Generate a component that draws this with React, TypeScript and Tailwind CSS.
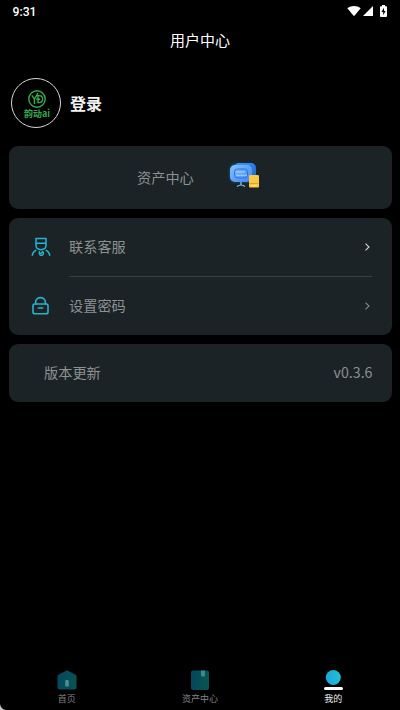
import type { ReactNode } from 'react';

const StatusBar = () => (
  <header className="flex h-6 items-center justify-between pl-[12.5px] pr-[13px] text-white">
    <span className="mt-px font-[Roboto,sans-serif] text-[12.2px] font-medium leading-none">9:31</span>
    <div className="-mt-[2px] flex items-center">
      <svg className="h-3 w-[14px]" viewBox="0 0 14 12" fill="currentColor">
        <path d="M0.3 3.2C4.2 0.1 9.8 0.1 13.7 3.2L7 11.2Z" />
      </svg>
      <svg className="ml-[2px] h-3 w-[10px]" viewBox="0 0 10 12" fill="currentColor">
        <path d="M10 1V11H0Z" />
      </svg>
      <svg className="ml-[7px] h-3 w-[7px]" viewBox="0 0 7 12">
        <path d="M2 0h3v1.3h1.3q.7 0 .7.7v9q0 1-.9 1H.9Q0 12 0 11V2q0-.7.7-.7H2Z" fill="currentColor" />
        <path d="M4 2.8 1.4 7h1.8v3.2L5.6 6H4Z" fill="#000" />
      </svg>
    </div>
  </header>
);

const Avatar = () => (
  <div className="flex h-[50px] w-[50px] flex-col items-center rounded-full border border-[#d8d8d8] pt-[11px] pl-[2px] text-[#35aa4b]">
    <svg className="h-[18px] w-[18px] shrink-0" viewBox="0 0 18 18" fill="none" stroke="currentColor" strokeWidth="1.4">
      <circle cx="9" cy="9" r="8.2" />
      <path d="M3.8 5.4 6.4 9.2M10 3.2 6.4 9.2V14M10 5.6V12.6h1.2c4.6 0 4.6-7 0-7H9M8.2 9.2h4" />
    </svg>
    <span className="whitespace-nowrap text-[9px] font-bold leading-[11px]">韵动ai</span>
  </div>
);

const AssetIcon = () => (
  <svg className="h-[32px] w-[36px]" viewBox="0 0 36 32">
    <defs>
      <linearGradient id="asset-back" x1="0" x2="1" y1="0" y2="1">
        <stop stopColor="#3e9bf0" />
        <stop offset="1" stopColor="#1764cf" />
      </linearGradient>
      <linearGradient id="asset-front" x1="0" x2="1" y1="0" y2="1">
        <stop stopColor="#86c4ff" />
        <stop offset="1" stopColor="#3f82f2" />
      </linearGradient>
      <filter id="glow" x="-30%" y="-30%" width="160%" height="160%">
        <feGaussianBlur stdDeviation="1.6" />
      </filter>
    </defs>
    <rect x="3" y="5" width="24" height="18" rx="5" fill="#087bc8" opacity=".65" filter="url(#glow)" />
    <rect x="7" y="4" width="22" height="18" rx="5" fill="url(#asset-back)" />
    <rect x="3" y="6" width="22" height="17" rx="5" fill="url(#asset-front)" />
    <rect x="7.5" y="10" width="13" height="9" rx="3" fill="none" stroke="#2f72df" strokeWidth="1" />
    <path d="M9 13h9M9 16.2h11" stroke="#a8d4ff" strokeWidth="1.1" />
    <path d="M14 23v3M10 27.5q4-3 8 0" fill="none" stroke="#8aceef" strokeWidth="1.2" />
    <rect x="22" y="16" width="10" height="12.5" rx="1" fill="#fac943" />
    <path d="M22.5 24.5h9" stroke="#d69522" strokeWidth=".8" />
    <path d="M24.5 26.6h5" stroke="#fff0a2" strokeWidth=".8" />
  </svg>
);

const ServiceIcon = () => (
  <svg className="h-5 w-5" viewBox="0 0 20 20" fill="none" stroke="#25b4cf" strokeWidth="1.5" strokeLinecap="round" strokeLinejoin="round">
    <path d="M5 1.6h10v4.6H5ZM5 6.2v2.4c0 5.4 10 5.4 10 0V6.2M1.3 18.2c.3-2.2 1.4-3.8 3.4-4.8M18.7 18.2c-.3-2.2-1.4-3.8-3.4-4.8" />
    <path d="M8.4 14.8v1.6a2 2 0 1 0 3.2-1.7L10 16.2" />
  </svg>
);

const LockIcon = () => (
  <svg className="h-5 w-5" viewBox="0 0 20 20" fill="none" stroke="#25b4cf" strokeWidth="1.6" strokeLinecap="round" strokeLinejoin="round">
    <rect x="2" y="8" width="15" height="9.8" rx="1.8" />
    <path d="M4.6 8V6.5C4.6 0 14.4 0 14.4 6.5V8M7.3 12h4.4" />
  </svg>
);

type MenuRowProps = {
  icon: ReactNode;
  label: string;
  arrowClass: string;
};

const MenuRow = ({ icon, label, arrowClass }: MenuRowProps) => (
  <div className="flex h-[58px] items-center pl-[22px] pr-[21px]">
    {icon}
    <span className="ml-[18px] flex-1">{label}</span>
    <svg className={`h-2 w-[7px] ${arrowClass}`} viewBox="0 0 7 8" fill="none" stroke="currentColor" strokeWidth="1.1">
      <path d="M1.5.7 5 4 1.5 7.3" />
    </svg>
  </div>
);

const HomeIcon = () => (
  <svg className="h-[22px] w-[22px]" viewBox="0 0 22 22">
    <path d="M11 1.2 20 6q.5.3.5 1v11.5q0 2-2 2h-15q-2 0-2-2V7q0-.7.5-1Z" fill="url(#tab-fill)" />
    <rect x="9.2" y="11" width="3.6" height="6.5" rx="1" fill="#4c8d92" />
  </svg>
);

const BookIcon = () => (
  <svg className="h-[22px] w-[22px]" viewBox="0 0 22 22">
    <rect x="2" y="1.5" width="18" height="19.5" rx="2" fill="url(#tab-fill)" />
    <path d="M5 2v18.5" stroke="#08404f" strokeWidth=".6" />
    <path d="M12 1.5h4v5.2q-2 2-4 0Z" fill="#438589" />
  </svg>
);

const ProfileIcon = () => (
  <svg className="h-[22px] w-[22px]" viewBox="0 0 22 22">
    <circle cx="11.3" cy="8.5" r="7.5" fill="url(#profile-fill)" />
    <rect x="2" y="18" width="19" height="3" rx="1.5" fill="#fff" />
  </svg>
);

const tabs = [
  { label: '首页', icon: HomeIcon, active: false },
  { label: '资产中心', icon: BookIcon, active: false },
  { label: '我的', icon: ProfileIcon, active: true }
];

const TabBar = () => (
  <nav className="relative mt-auto grid h-[41px] grid-cols-3">
    <svg className="absolute h-0 w-0">
      <defs>
        <linearGradient id="tab-fill">
          <stop stopColor="#07475f" />
          <stop offset="1" stopColor="#065552" />
        </linearGradient>
        <linearGradient id="profile-fill">
          <stop stopColor="#1ea7df" />
          <stop offset="1" stopColor="#20c0d0" />
        </linearGradient>
      </defs>
    </svg>
    {tabs.map((tab) => (
      <div key={tab.label} className="flex flex-col items-center">
        <tab.icon />
        <span className={`mt-[2px] text-[9px] leading-[12px] ${tab.active ? 'text-[#eeeeee]' : 'text-[#858585]'}`}>
          {tab.label}
        </span>
      </div>
    ))}
    {/* Rounded screen corner */}
    <svg className="absolute bottom-0 left-0 h-[6px] w-[6px]" viewBox="0 0 6 6">
      <path d="M0 0Q.9 5 5.5 6H0Z" fill="#c4c4c4" />
    </svg>
  </nav>
);

const App = () => {
  return (
    <div className="flex h-[710px] w-[400px] flex-col overflow-hidden bg-black font-['Noto_Sans_CJK_SC',sans-serif]">
      <StatusBar />
      <h1 className="h-[34px] text-center text-[15px] leading-[32px] text-white">用户中心</h1>

      <div className="mt-5 ml-[11px] flex items-center">
        <Avatar />
        <span className="ml-[9px] text-[16px] font-bold text-[#f2f2f2]">登录</span>
      </div>

      <main className="mt-[18px] ml-[9px] mr-2 flex flex-col gap-[9px] text-[14.2px] text-[#8d9192]">
        <section className="flex h-[63px] items-center rounded-[9px] bg-[#1b2326] pl-32">
          <span>资产中心</span>
          <div className="ml-[33px] -mt-[5px]">
            <AssetIcon />
          </div>
        </section>

        <section className="flex h-[117px] flex-col rounded-[9px] bg-[#1b2326]">
          <MenuRow icon={<ServiceIcon />} label="联系客服" arrowClass="text-[#d5d7d7]" />
          <div className="ml-[60px] mr-5 h-px bg-[#394043]" />
          <MenuRow icon={<LockIcon />} label="设置密码" arrowClass="text-[#858a8b]" />
        </section>

        <section className="flex h-[58px] items-center justify-between rounded-[9px] bg-[#1b2326] pl-[35px] pr-[19.5px]">
          <span>版本更新</span>
          <span>v0.3.6</span>
        </section>
      </main>

      <TabBar />
    </div>
  );
};

export default App;
